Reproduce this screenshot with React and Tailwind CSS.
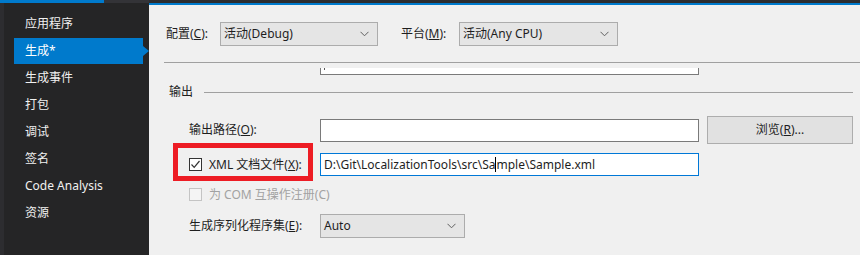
import React from "react";

const font = "font-['Noto_Sans','Noto_Sans_CJK_SC',sans-serif]";

function Chevron() {
  return (
    <svg width="9" height="6" viewBox="0 0 9 6" className="shrink-0">
      <polyline points="0.5,0.8 4.5,4.8 8.5,0.8" fill="none" stroke="#606060" strokeWidth="1" />
    </svg>
  );
}

function Select({ text, w }) {
  return (
    <div className={`${w} h-[24px] bg-[#e5e5e5] border border-[#acacac] flex items-center justify-between pl-[3px] pr-[8px] text-[12px] text-[#1e1e1e]`}>
      <span>{text}</span>
      <Chevron />
    </div>
  );
}

function Check({ checked, disabled }) {
  return (
    <div className={`w-[13px] h-[13px] border ${disabled ? "border-[#c4c4c4] bg-[#f4f4f4]" : "border-[#333333] bg-white"} flex items-center justify-center shrink-0`}>
      {checked && (
        <svg width="11" height="11" viewBox="0 0 11 11">
          <polyline points="1.5,5.5 4.2,8.3 9.5,2" fill="none" stroke="#333" strokeWidth="1.2" />
        </svg>
      )}
    </div>
  );
}

const items = ["应用程序", "生成*", "生成事件", "打包", "调试", "签名", "Code Analysis", "资源"];

export default function App() {
  return (
    <div className={`w-[860px] h-[255px] flex overflow-hidden ${font}`}>
      {/* Sidebar */}
      <div className="w-[149px] h-full flex flex-col bg-[#252526] shrink-0">
        <div className="h-[3px] flex">
          <div className="w-[104px] bg-[#007acc]" />
          <div className="flex-1 bg-[#333337]" />
        </div>
        <div className="flex flex-1">
          <div className="w-[4px] bg-[#2d2d30]" />
          <div className="flex-1 pt-[7px] flex flex-col">
            {items.map((t, i) => (
              <div key={t} className="h-[27px] flex items-center">
                {i === 1 ? (
                  <div className="relative ml-[10px] w-[129px] h-[26px] bg-[#007acc] flex items-center pl-[11px] text-[12px] text-white">
                    {t}
                    <div className="absolute left-full top-[8px] w-0 h-0 border-y-[5px] border-y-transparent border-l-[6px] border-l-[#007acc]" />
                  </div>
                ) : (
                  <div className="pl-[21px] text-[12px] text-[#f1f1f1]">{t}</div>
                )}
              </div>
            ))}
          </div>
        </div>
      </div>

      {/* Main panel */}
      <div className="flex-1 h-full bg-[#f0f0f0] flex flex-col text-[12px] text-[#1e1e1e]">
        <div className="h-[3px] bg-[#2d2d30]" />
        <div className="h-[2px] bg-[#007acc]" />

        <div className="mt-[17px] flex items-center">
          <div className="w-[71px] pl-[17px]">配置(<span className="underline">C</span>):</div>
          <Select text="活动(Debug)" w="w-[158px]" />
          <div className="w-[81px] pl-[23px]">平台(<span className="underline">M</span>):</div>
          <Select text="活动(Any CPU)" w="w-[159px]" />
        </div>

        <div className="mt-[16px] ml-[15px] h-px bg-[#a0a0a0]" />

        <div className="mt-[5px] ml-[171px] w-[379px] h-[7px] bg-white border-x border-b border-[#7a7a7a]">
          <div className="ml-[3px] w-px h-[2px] bg-[#555]" />
        </div>

        <div className="mt-[9px] h-[16px] flex items-center pl-[20px]">
          <span>输出</span>
          <div className="ml-[11px] mr-[7px] flex-1 h-px bg-[#a0a0a0]" />
        </div>

        <div className="mt-[16px] h-[28px] flex items-center">
          <div className="w-[171px] pl-[40px]">输出路径(<span className="underline">O</span>):</div>
          <div className="w-[379px] h-[23px] bg-white border border-[#7a7a7a]" />
          <div className="ml-[8px] w-[146px] h-[28px] bg-[#e1e1e1] border border-[#adadad] flex items-center justify-center">
            浏览(<span className="underline">R</span>)...
          </div>
        </div>

        <div className="mt-[9px] h-[23px] flex items-center relative">
          <div className="absolute left-[24px] top-[-10px] w-[140px] h-[38px] border-[5px] border-[#ed1c24]" />
          <div className="w-[171px] pl-[40px] flex items-center gap-[7px]">
            <Check checked />
            <span>XML 文档文件(<span className="underline">X</span>):</span>
          </div>
          <div className="w-[379px] h-[23px] bg-white border border-[#0078d7] flex items-center pl-[3px] whitespace-nowrap">
            <span>D:\Git\LocalizationTools\src\Sa</span>
            <span className="inline-block w-px h-[15px] bg-black" />
            <span>mple\Sample.xml</span>
          </div>
        </div>

        <div className="mt-[12px] h-[13px] flex items-center pl-[40px] gap-[7px] text-[#a2a2a2]">
          <Check disabled />
          <span>为 COM 互操作注册(C)</span>
        </div>

        <div className="mt-[13px] flex items-center">
          <div className="w-[171px] pl-[40px]">生成序列化程序集(<span className="underline">E</span>):</div>
          <Select text="Auto" w="w-[145px]" />
        </div>
      </div>
    </div>
  );
}
